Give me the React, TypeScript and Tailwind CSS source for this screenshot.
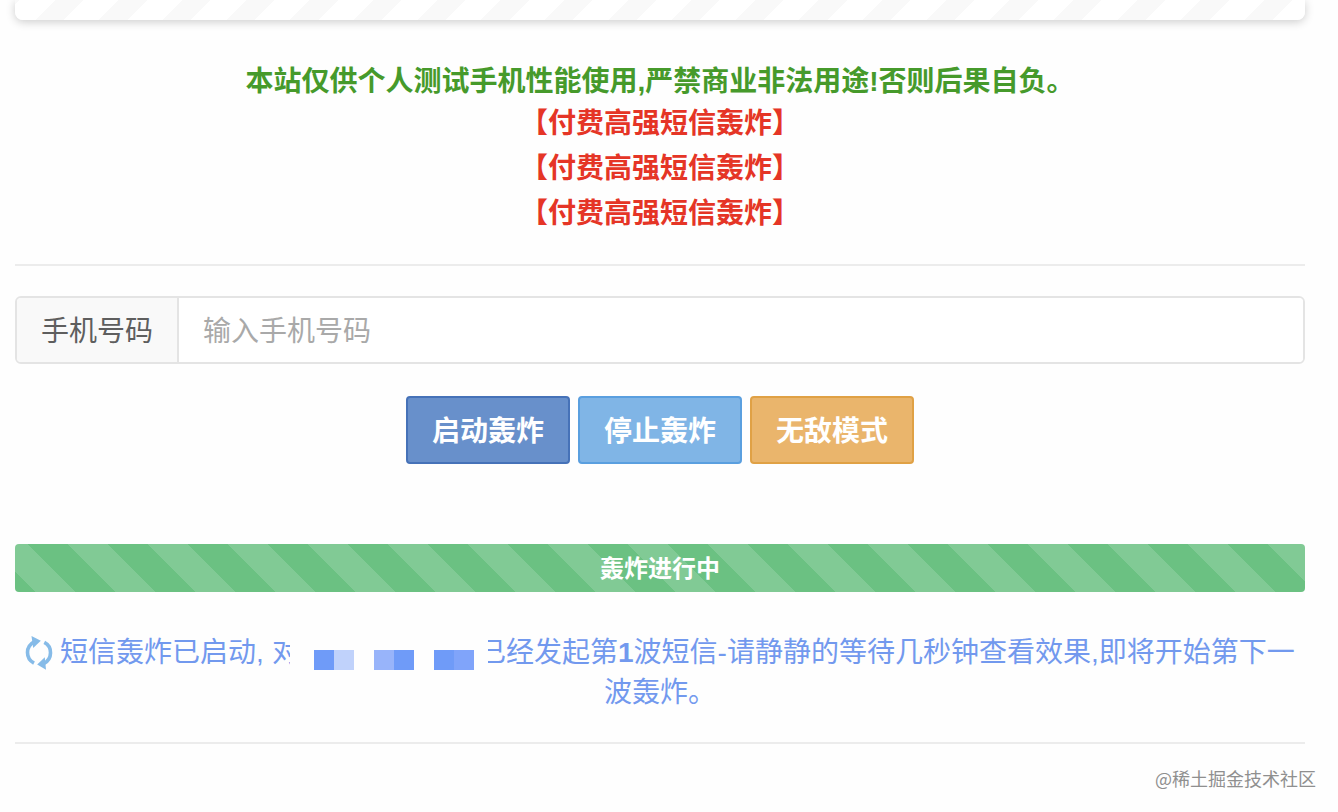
import React from 'react';
import clsx from 'clsx';

const notices = ['【付费高强短信轰炸】', '【付费高强短信轰炸】', '【付费高强短信轰炸】'];

const actions = [
  { label: '启动轰炸', style: 'bg-[#6890cb] border-[#4672b8]' },
  { label: '停止轰炸', style: 'bg-[#80b5e6] border-[#5a9fdf]' },
  { label: '无敌模式', style: 'bg-[#eab56c] border-[#e0a145]' },
];

// hidden phone number, drawn as mosaic pairs
const mosaic = [
  ['bg-[#6f9bf8]', 'bg-[#c0d2fb]'],
  ['bg-[#98b4fa]', 'bg-[#6f9bf8]'],
  ['bg-[#6f9bf8]', 'bg-[#80a4fa]'],
];

const RefreshIcon: React.FC = () => (
  <svg width="28" height="34" viewBox="0 0 28 34" fill="none" className="shrink-0">
    <path d="M9 27.2C0.5 22.5 0 10.5 9.5 5.6" stroke="#86bbe8" strokeWidth="3.6" />
    <path d="M19.3 6.3C27.5 10.5 28 23 18.3 28" stroke="#86bbe8" strokeWidth="3.6" />
    <path d="M6.5 0L15.8 4.8L8.2 12Z" fill="#86bbe8" />
    <path d="M21 33.8L12.2 28.6L19.8 21.3Z" fill="#86bbe8" />
  </svg>
);

const StatusMessage: React.FC = () => (
  <div className="mt-[41px] text-[28px] leading-[40px] text-[#7299ee]">
    <div className="flex h-[40px] items-center whitespace-nowrap pl-[10px]">
      <RefreshIcon />
      <span className="ml-[7px] w-[212px]">短信轰炸已启动,</span>
      <span className="w-[18px] overflow-hidden">对</span>
      <span className="ml-[24px] mt-[14px] flex gap-[20px]">
        {mosaic.map((pair, i) => (
          <span key={i} className="flex">
            <span className={clsx('h-[20px] w-[20px]', pair[0])} />
            <span className={clsx('h-[20px] w-[20px]', pair[1])} />
          </span>
        ))}
      </span>
      <span className="ml-[14px] flex w-[18px] justify-end overflow-hidden">已</span>
      <span>
        经发起第<b>1</b>波短信-请静静的等待几秒钟查看效果,即将开始第下一
      </span>
    </div>
    <div className="text-center">波轰炸。</div>
  </div>
);

export default function App() {
  return (
    <div className="h-[812px] w-[1338px] overflow-hidden bg-[#fefefe] pl-[15px] font-['Liberation_Sans','Noto_Sans_CJK_SC',sans-serif]">
      <div className="w-[1290px]">
        <div className="h-[20px] rounded-b-[8px] bg-[repeating-linear-gradient(135deg,#f9f9f9_0px,#f9f9f9_3.5px,#ffffff_3.5px,#ffffff_28.5px,#f9f9f9_28.5px,#f9f9f9_45px)] shadow-[0_2px_10px_rgba(0,0,0,0.2)]" />

        <div className="mt-[41px] text-center text-[28px] font-bold">
          <p className="h-[40px] leading-[41px] text-[#469a2b]">本站仅供个人测试手机性能使用,严禁商业非法用途!否则后果自负。</p>
          {notices.map((text, i) => (
            <p key={i} className="h-[45px] leading-[45px] text-[#e53526]">{text}</p>
          ))}
        </div>

        <hr className="mt-[28px] border-t-2 border-[#ececec]" />

        <div className="mt-[30px] flex h-[68px] overflow-hidden rounded-[6px] border-2 border-[#e4e4e4] text-[28px]">
          <label className="flex w-[162px] items-center justify-center border-r-2 border-[#e4e4e4] bg-[#f9f9f9] pt-[3px] text-[#5e5e5e]">手机号码</label>
          <input className="flex-1 bg-white px-[24px] pt-[3px] outline-none placeholder:text-[#a9a9a9]" placeholder="输入手机号码" />
        </div>

        <div className="mt-[32px] flex justify-center gap-[8px]">
          {actions.map((action) => (
            <button
              key={action.label}
              className={clsx('h-[68px] w-[164px] rounded-[4px] border-2 pt-[3px] text-[28px] font-bold text-white', action.style)}
            >
              {action.label}
            </button>
          ))}
        </div>

        <div className="mt-[80px] h-[48px] rounded-[4px] bg-[#6bc182] bg-[linear-gradient(45deg,rgba(255,255,255,0.15)_25%,transparent_25%,transparent_50%,rgba(255,255,255,0.15)_50%,rgba(255,255,255,0.15)_75%,transparent_75%,transparent)] bg-[length:80px_80px] bg-[position:53px_0px] text-center text-[24px] font-bold leading-[50px] text-white">
          轰炸进行中
        </div>

        <StatusMessage />

        <hr className="mt-[29px] border-t-2 border-[#ececec]" />
      </div>

      <div className="mt-[20px] pr-[22px] text-right font-['Noto_Sans_CJK_SC',sans-serif] text-[18px] leading-[28px] text-[#8f8f8f]">@稀土掘金技术社区</div>
    </div>
  );
}
